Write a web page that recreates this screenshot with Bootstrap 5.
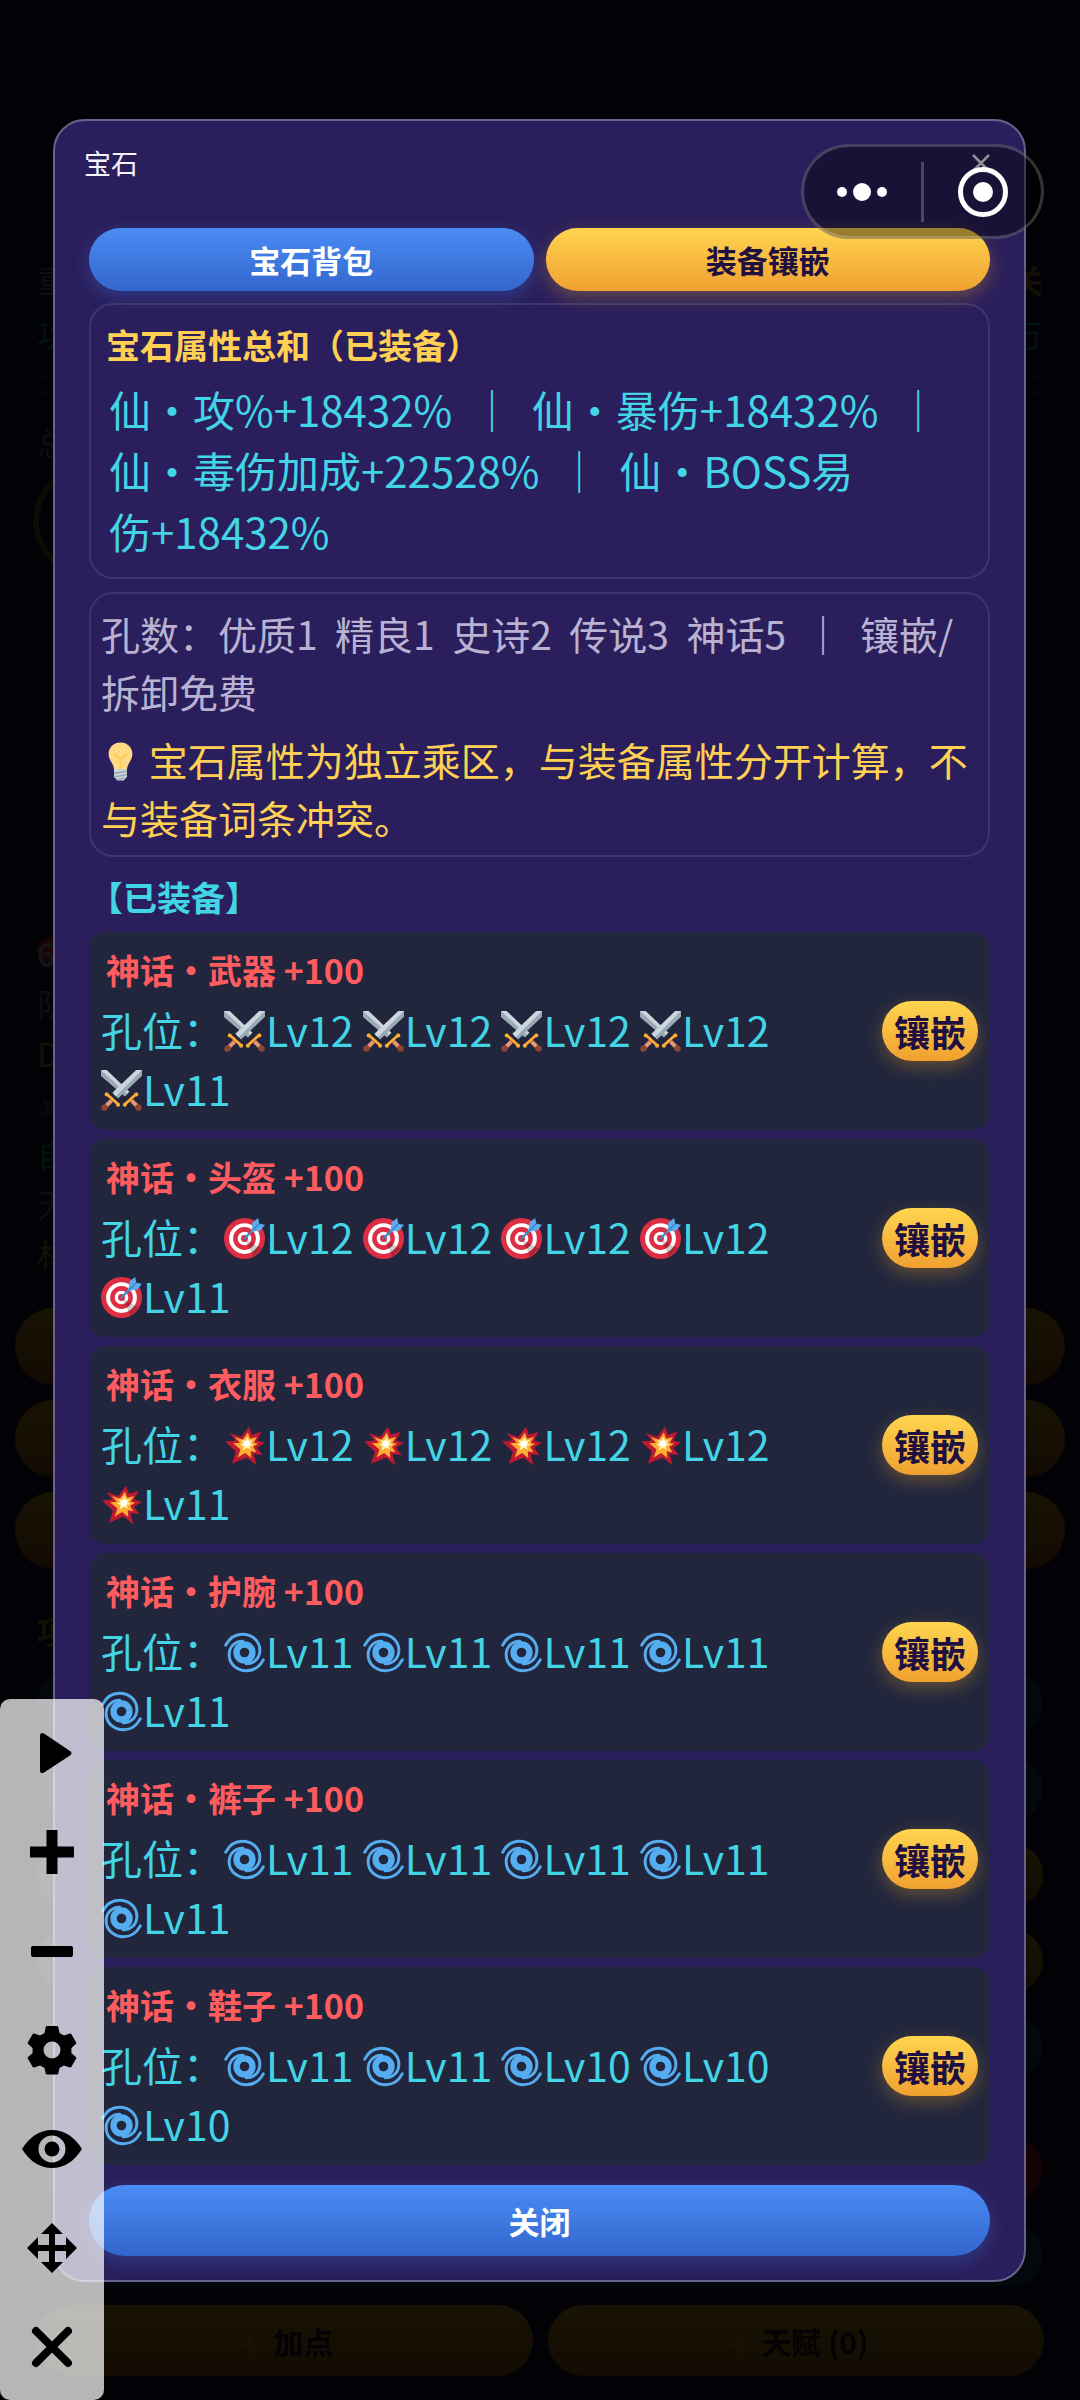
<!DOCTYPE html>
<html lang="zh-CN">
<head>
<meta charset="utf-8">
<meta name="viewport" content="width=device-width, initial-scale=1">
<title>宝石</title>
<link rel="stylesheet" href="https://cdn.jsdelivr.net/npm/bootstrap@5.3.0/dist/css/bootstrap.min.css">
<script src="https://cdn.jsdelivr.net/npm/bootstrap@5.3.0/dist/js/bootstrap.bundle.min.js"></script>
<style>
  body { background: #020206; font-family: "Noto Sans CJK SC", "Noto Sans", sans-serif; overflow-x: hidden; }
  button { font-family: inherit; }

  /* dimmed game screen behind the dialog */
  .game { min-height: 100vh; padding: 250px 15px 0; font-size: 32px; line-height: 54px; color: #0e0e12; }
  .game-panel { border: 2px solid #050509; border-radius: 24px; padding: 0 20px; }
  .panel-stats { height: 128px; }
  .panel-team { height: 901px; margin-top: 14px; padding-top: 22px; line-height: 50px; }
  .avatar { width: 110px; height: 110px; border-radius: 50%; border: 6px solid #0d0b04; margin: 0 0 360px -4px; }
  .rank { color: #141417; }
  .rank::before { content: ""; display: block; width: 40px; height: 28px; margin-bottom: -36px; border-radius: 50%; background: #180404; }
  .panel-stack { gap: 15px; margin-top: 15px; }
  .pill-dim { border: 0; border-radius: 39px; height: 77px; background: linear-gradient(#181304, #130b02); }
  .panel-func { height: 712px; margin-top: 14px; padding: 18px 20px; }
  .panel-func .pill-dim { height: 64px; }
  .func-list { gap: 22px; margin-top: 14px; }
  .pill-teal { background: #03080d; }
  .pill-red { background: #140304; margin-top: 36px; }
  .game-foot { gap: 15px; padding: 0 21px; margin-top: 10px; }
  .game-foot .pill-dim { height: 71px; font-size: 30px; font-weight: 700; color: #030204; }
  .game-foot svg { width: 28px; height: 28px; margin-right: 10px; fill: #1a1305; }
  .dim-gold { color: #151005; } .dim-teal { color: #03110f; } .dim-green { color: #03120a; }

  /* dialog */
  .overlay { padding: 119px 54px 0 53px; }
  .gem-dialog { background: #2a1f5c; border: 2px solid #6a628c; border-radius: 32px; padding: 0 34px 24px; }
  .gem-head { height: 107px; margin: 0 -5px; padding-top: 20px; }
  .gem-title { font-size: 27px; line-height: 44px; color: #f4f2fa; font-weight: 400; }
  .gem-x { border: 0; background: none; padding: 0; width: 24px; height: 44px; margin-right: 2px; }
  .gem-x svg { display: block; width: 18px; height: 18px; margin: auto; }
  .pill { border: 0; border-radius: 36px; font-size: 31px; font-weight: 700; line-height: 63px; padding: 0; }
  .pill-blue { color: #fff; background: linear-gradient(#4a8cf5, #3366cc); box-shadow: 0 6px 18px rgba(64,128,240,.28); }
  .pill-gold { color: #1e1040; background: linear-gradient(#ffd54f, #f0a030); box-shadow: 0 6px 18px rgba(255,176,40,.3); }
  .pill-sm { width: 96px; font-size: 36px; line-height: 60px; flex: none; }
  .pill-close { line-height: 71px; margin-top: 20px; }
  .gem-tabs { gap: 12px; }
  .info-box { border: 2px solid rgba(255,255,255,.1); border-radius: 24px; }
  .sum-box { margin-top: 12px; padding: 14px 18px 16px; }
  .sum-title { font-size: 34px; line-height: 52px; font-weight: 700; color: #ffd054; margin: 0 -3px; }
  .sum-text { font-size: 42px; line-height: 61px; color: #43d4e6; margin: 7px 0 0; }
  .rule-box { margin-top: 13px; padding: 10px 10px 9px; font-size: 39px; line-height: 58px; }
  .rule-text { color: #b9b2d2; margin: 0 0 10px; }
  .tip-text { color: #ffd054; margin: 0; }
  .list-head { font-size: 34px; line-height: 71px; font-weight: 700; color: #43d4e6; margin: 0; padding-top: 4px; }
  .gear-list { gap: 9px; }
  .gear-row { min-height: 198px; background: #21263d; border-radius: 16px; padding: 12px; }
  .gear-name { font-size: 34px; line-height: 52px; font-weight: 700; color: #ff5c5f; margin: 0 5px; }
  .gear-slots { font-size: 41px; line-height: 59px; color: #43d4e6; margin: 4px 0 0; max-width: 700px; }
  .slot { white-space: nowrap; }
  .emo { width: 1em; height: 1em; vertical-align: -5px; display: inline-block; }
  .slot .emo { margin-right: 1px; }

  /* floating controls */
  .capsule { position: absolute; top: 144px; right: 36px; width: 243px; height: 95px; border: 3px solid rgba(255,255,255,.2); border-radius: 48px; background: rgba(0,0,0,.4); }
  .capsule button { border: 0; background: none; padding: 0; flex: 1; height: 89px; }
  .capsule svg { display: block; margin: auto; }
  .capsule-line { width: 3px; height: 60px; background: rgba(255,255,255,.22); }
  .tool-bar { position: absolute; left: 0; top: 1699px; width: 104px; padding: 4px 0; border-radius: 10px; background: rgba(252,252,252,.72); }
  .tool-bar button { border: 0; background: none; padding: 0; height: 99px; }
  .tool-bar svg { display: block; margin: auto; width: 64px; height: 64px; }
</style>
</head>
<body class="position-relative">

<svg class="d-none" aria-hidden="true">
  <symbol id="e-sword" viewBox="0 0 36 36">
    <path fill="#ccd6dd" d="M0 0h5l20 19-4 4L0 5z"/><path fill="#99aab5" d="M0 0l23 21-2 2L0 5z"/>
    <path fill="#99aab5" d="M36 0v5L15 25l-4-4L31 0z"/><path fill="#ccd6dd" d="M36 0L13 23l-3-3L31 0z"/>
    <path stroke="#a0563f" stroke-width="4" d="M10 26l-7 7M26 26l7 7"/>
    <path stroke="#e29b7d" stroke-width="3" d="M9 27l-4 4M27 27l4 4"/>
    <circle cx="3" cy="33" r="2.8" fill="#8a4633"/><circle cx="33" cy="33" r="2.8" fill="#8a4633"/>
    <path stroke="#ffac33" stroke-width="2.4" stroke-linecap="round" d="M5 21l10 9M31 21l-10 9"/>
    <g fill="#ffac33"><circle cx="5" cy="21.5" r="1.8"/><circle cx="15" cy="30.5" r="1.8"/><circle cx="31" cy="21.5" r="1.8"/><circle cx="21" cy="30.5" r="1.8"/></g>
  </symbol>
  <symbol id="e-target" viewBox="0 0 36 36">
    <circle cx="18" cy="18" r="18" fill="#dd2e44"/><circle cx="18" cy="18" r="13.5" fill="#fff"/><circle cx="18" cy="18" r="10" fill="#dd2e44"/><circle cx="18" cy="18" r="6" fill="#fff"/><circle cx="18" cy="18" r="3" fill="#dd2e44"/>
    <path fill="#000" opacity=".2" d="M18.200 18.300L33 27l-7 7z"/>
    <path stroke="#4289c1" stroke-width="2" stroke-linecap="round" d="M18 18L30 6"/>
    <path fill="#5dadec" d="M24 11l1-7 5-4 1 5 5 1-4 5-7 1z"/><path stroke="#3b88c3" stroke-width="1.400" d="M25 11l6-6"/>
  </symbol>
  <symbol id="e-burst" viewBox="0 0 36 36">
    <path fill="#be1931" d="M5 7l10 3.500L22 1.500l2.500 7 8.500-2.500-4 7.500 7 2-7 4.500 5 6.500-8-1 2.500 10-8.500-7L7 34l3.500-10.500L1 14.500l9-1z"/>
    <path fill="#ffac33" d="M9.500 10.500l7 2.500L21 6.500l2 5.500 6-1.500-3 5 4 1-4.500 2.500 3 5-5-1 .5 6-5.500-4.500-6.500 4 2.500-7L8 16l6-.5z"/>
    <path fill="#fff0a8" d="M15 12.500l3.500 1.500L20.500 10l1.500 3.500 3-.5-1.500 3 2.500 1.500-3.500 1 1 3-3.500-1.500-3.500 2.500.5-4-3-1.500 3-1z"/><circle cx="20" cy="16.500" r="2.600" fill="#fff"/>
  </symbol>
  <symbol id="e-swirl" viewBox="0 0 36 36">
    <g fill="none" stroke="#55acee" stroke-linecap="round">
      <circle cx="18" cy="18" r="7" stroke-width="5.600"/>
      <path stroke-width="2.600" d="M1.500 11.500C5 5 10 2 16 2c9 0 15.500 6 15.500 14 0 7-5 12-12 12"/>
      <path stroke-width="2.600" d="M34.500 24.500C31 31 26 34 20 34 11 34 4.500 28 4.500 20c0-7 5-12 12-12"/>
    </g>
  </symbol>
  <symbol id="e-bulb" viewBox="0 0 36 36">
    <path fill="#ffd983" d="M29 11.100C29 5 24.300.5 18 .5S7 5 7 11.100c0 5.900 4.800 8.500 5 14.400h12c.2-5.900 5-8.500 5-14.400z"/>
    <path fill="none" stroke="#ffcc4d" stroke-width="1.800" stroke-linecap="round" d="M12.500 11l5.500 5 5.500-5M18 16v9"/>
    <path fill="#ccd6dd" d="M12 25h12v7l-3 3.500h-6L12 32z"/><path stroke="#99aab5" stroke-width="1.600" d="M12 29l12-2M12 32.500l12-2.500M15 35l7-2"/>
  </symbol>
  <symbol id="e-spark" viewBox="0 0 36 36"><path d="M20 4l4 11 10 4-10 4-4 11-4-11-10-4 10-4zM6 2l2 5 5 2-5 2-2 5-2-5-4-2 4-2z"/></symbol>
</svg>

<main class="game" aria-hidden="true">
  <section class="game-panel panel-stats">
    <div class="d-flex justify-content-between"><span>重</span><span class="dim-gold fw-bold">关</span></div>
    <div class="d-flex justify-content-between dim-teal"><span>功</span><span>万</span></div>
  </section>
  <section class="game-panel panel-team">
    <div>总</div>
    <div class="avatar"></div>
    <div class="rank fw-bold">6</div>
    <div>队</div>
    <div class="dim-gold">D</div>
    <div>☠</div>
    <div class="dim-green">自</div>
    <div>无</div>
    <div class="dim-gold">材</div>
  </section>
  <div class="panel-stack d-grid">
    <div class="pill-dim"></div><div class="pill-dim"></div><div class="pill-dim"></div>
  </div>
  <section class="game-panel panel-func">
    <div class="dim-gold fw-bold">项</div>
    <div class="func-list d-grid">
      <div class="pill-dim pill-teal"></div><div class="pill-dim pill-teal"></div><div class="pill-dim"></div><div class="pill-dim"></div><div class="pill-dim pill-teal"></div><div class="pill-dim pill-red"></div><div class="pill-dim pill-teal"></div>
    </div>
  </section>
  <div class="game-foot d-flex">
    <button class="pill-dim flex-fill w-50" type="button" tabindex="-1"><svg><use href="#e-spark"/></svg>加点</button>
    <button class="pill-dim flex-fill w-50" type="button" tabindex="-1"><svg><use href="#e-spark"/></svg>天赋 (0)</button>
  </div>
</main>

<div class="overlay position-absolute top-0 start-0 w-100">
  <section class="gem-dialog" role="dialog" aria-labelledby="gem-title">
    <header class="gem-head d-flex justify-content-between align-items-start">
      <h1 class="gem-title m-0" id="gem-title">宝石</h1>
      <button class="gem-x" type="button" aria-label="关闭"><svg viewBox="0 0 18 18" stroke="#f0eef8" stroke-width="2.500"><path d="M1 1l16 16M17 1L1 17"/></svg></button>
    </header>
    <div class="gem-tabs d-flex">
      <button class="pill pill-blue w-50" type="button">宝石背包</button>
      <button class="pill pill-gold w-50" type="button">装备镶嵌</button>
    </div>

    <div class="info-box sum-box">
      <h2 class="sum-title">宝石属性总和（已装备）</h2>
      <p class="sum-text">仙・攻%+18432%&nbsp; ｜ &nbsp;仙・暴伤+18432%&nbsp; ｜ &nbsp;<br>仙・毒伤加成+22528%&nbsp; ｜ &nbsp;仙・BOSS易<br>伤+18432%</p>
    </div>

    <div class="info-box rule-box">
      <p class="rule-text">孔数：优质1&nbsp; 精良1&nbsp; 史诗2&nbsp; 传说3&nbsp; 神话5&nbsp; ｜ &nbsp;镶嵌/<br>拆卸免费</p>
      <p class="tip-text"><svg class="emo" role="img" aria-label="提示"><use href="#e-bulb"/></svg> 宝石属性为独立乘区，与装备属性分开计算，不与装备词条冲突。</p>
    </div>

    <h2 class="list-head">【已装备】</h2>
    <div class="gear-list d-flex flex-column" id="gear"></div>
    <button class="pill pill-blue pill-close w-100" type="button" id="close">关闭</button>
  </section>
</div>

<div class="capsule d-flex align-items-center">
  <button type="button" aria-label="更多"><svg width="54" height="20" viewBox="0 0 54 20" fill="#fff"><circle cx="6" cy="10" r="5"/><circle cx="26" cy="10" r="9"/><circle cx="46" cy="10" r="5"/></svg></button>
  <span class="capsule-line"></span>
  <button type="button" aria-label="退出"><svg width="50" height="50" viewBox="0 0 50 50"><circle cx="25" cy="25" r="22.500" fill="none" stroke="#fff" stroke-width="5"/><circle cx="25" cy="25" r="10" fill="#fff"/></svg></button>
</div>

<nav class="tool-bar d-flex flex-column" aria-label="工具">
  <button type="button" aria-label="播放"><svg viewBox="0 0 64 64"><path d="M24 12.500L50 30q3 2 0 4.500L24 51.500q-4 2-4-2.500V15q0-4.500 4-2.500z"/></svg></button>
  <button type="button" aria-label="增加"><svg viewBox="0 0 64 64" stroke="#000" stroke-width="11" stroke-linecap="butt"><path d="M10 32h44M32 10v44"/></svg></button>
  <button type="button" aria-label="减少"><svg viewBox="0 0 64 64"><rect x="11" y="27" width="42" height="11" rx="2"/></svg></button>
  <button type="button" aria-label="设置"><svg viewBox="0 0 64 64"><path fill-rule="evenodd" d="M27 8h10q1 0 1.300 1l1.200 6 4.500 2.600 5.800-2q1-.4 1.600.6l4.800 8.200q.5 1-.3 1.700L51.400 30v5l4.500 4q.8.7.3 1.600l-4.800 8.200q-.6 1-1.600.6l-5.800-2-4.500 2.600-1.200 5.600q-.3 1-1.300 1H27q-1 0-1.300-1L24.500 50 20 47.400l-5.800 2q-1 .4-1.600-.6l-4.800-8.200q-.5-.9.3-1.600l4.500-4v-5l-4.500-3.900q-.8-.7-.3-1.700l4.800-8.200q.6-1 1.600-.6l5.800 2 4.500-2.600 1.200-6Q26 8 27 8zm5 15.500a8.500 8.500 0 100 17 8.500 8.500 0 000-17z"/></svg></button>
  <button type="button" aria-label="显示"><svg viewBox="0 0 64 64"><path fill-rule="evenodd" d="M2 32Q14 13 32 13t30 19Q50 51 32 51T2 32zm30-13.500a13.500 13.500 0 100 27 13.500 13.500 0 000-27z"/><circle cx="32" cy="32" r="7.500"/></svg></button>
  <button type="button" aria-label="移动"><svg viewBox="0 0 64 64"><path d="M32 7l11 11h-8v11h11v-8l11 11-11 11v-8H35v11h8L32 57 21 46h8V35H18v8L7 32l11-11v8h11V18h-8z"/></svg></button>
  <button type="button" aria-label="关闭工具"><svg viewBox="0 0 64 64" stroke="#000" stroke-width="8" stroke-linecap="round"><path d="M16 16l32 32M48 16L16 48"/></svg></button>
</nav>

<script>
  const gear = [
    ["武器", "sword", [12, 12, 12, 12, 11]],
    ["头盔", "target", [12, 12, 12, 12, 11]],
    ["衣服", "burst", [12, 12, 12, 12, 11]],
    ["护腕", "swirl", [11, 11, 11, 11, 11]],
    ["裤子", "swirl", [11, 11, 11, 11, 11]],
    ["鞋子", "swirl", [11, 11, 10, 10, 10]]
  ];
  document.getElementById("gear").innerHTML = gear.map(([part, icon, levels]) => `
    <article class="gear-row d-flex align-items-center justify-content-between">
      <div>
        <h3 class="gear-name">神话・${part} +100</h3>
        <p class="gear-slots">孔位：${levels.map(n => `<span class="slot"><svg class="emo" aria-hidden="true"><use href="#e-${icon}"/></svg>Lv${n}</span>`).join(" ")}</p>
      </div>
      <button class="pill pill-gold pill-sm" type="button">镶嵌</button>
    </article>`).join("");
</script>
</body>
</html>
